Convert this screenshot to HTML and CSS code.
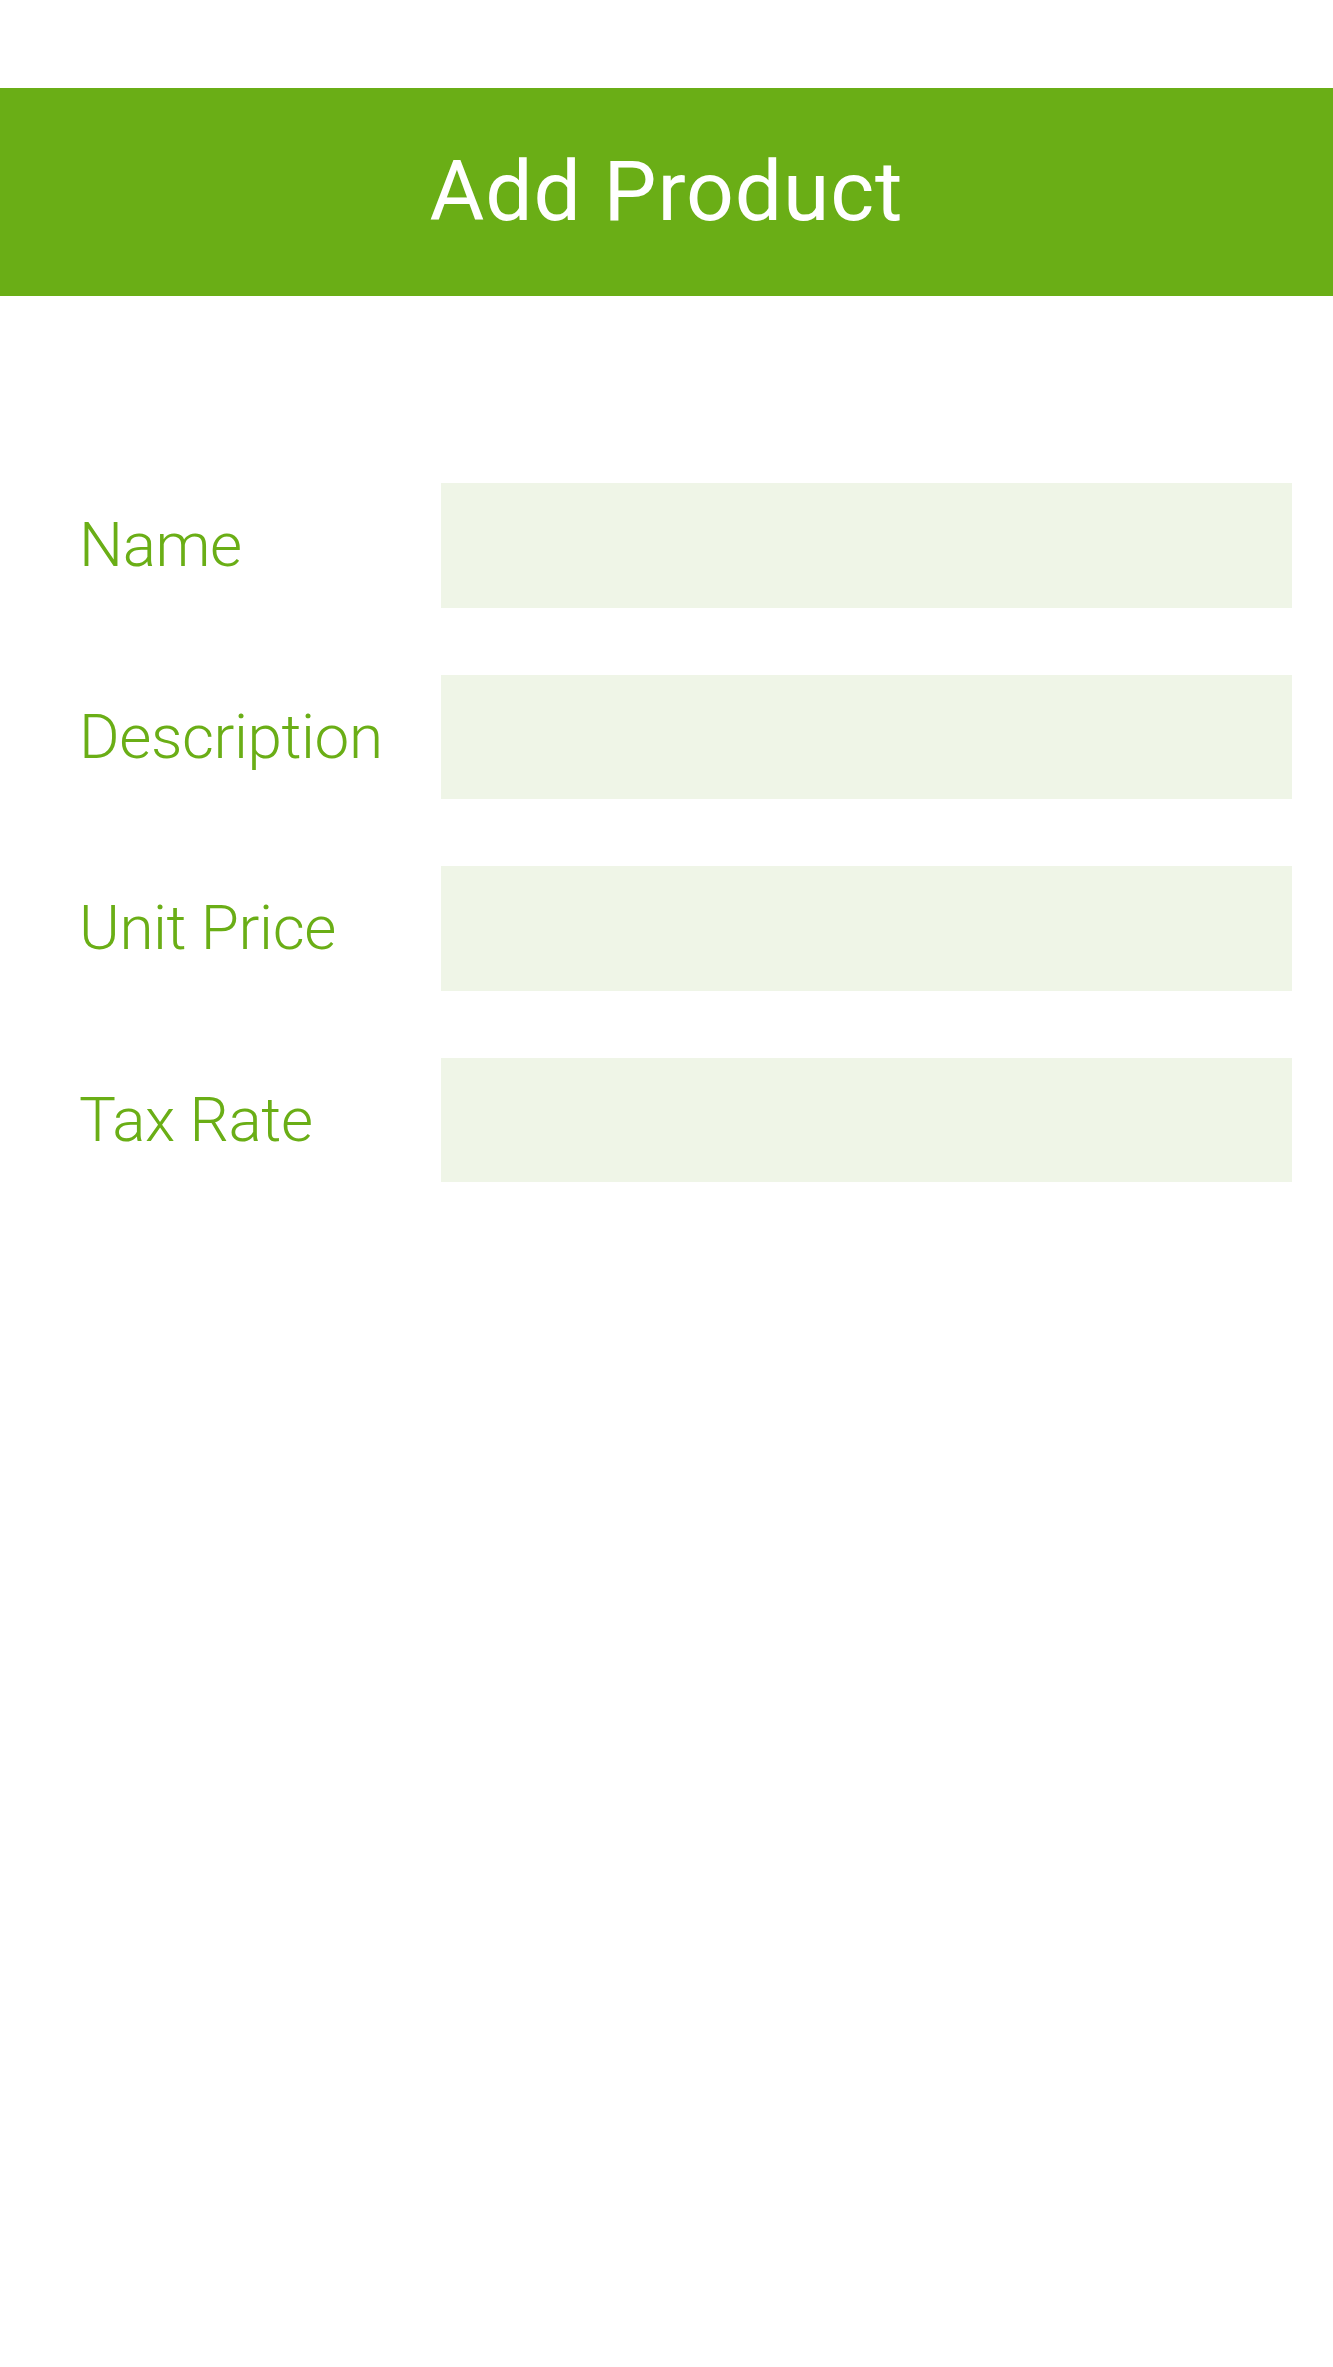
FILE: index.html
```html
<!DOCTYPE html>
<html lang="en">
<head>
<meta charset="utf-8">
<title>Add Product</title>
<link rel="stylesheet" href="styles.css">
</head>
<body>
<header class="header"><h1 class="title">Add Product</h1></header>
<form class="form">
  <div class="row"><label class="label" for="name">Name</label><input class="field" id="name" type="text"></div>
  <div class="row"><label class="label" for="desc">Description</label><input class="field" id="desc" type="text"></div>
  <div class="row"><label class="label" for="price">Unit Price</label><input class="field" id="price" type="text"></div>
  <div class="row"><label class="label" for="tax">Tax Rate</label><input class="field" id="tax" type="text"></div>
</form>
</body>
</html>
```
FILE: styles.css
```css
html, body {
  margin: 0;
  padding: 0;
  background: #ffffff;
}
body {
  font-family: Roboto, "Liberation Sans", sans-serif;
}
.header {
  margin-top: 88px;
  height: 208px;
  background: #6aae16;
  display: flex;
  align-items: center;
  justify-content: center;
}
.title {
  margin: 0;
  color: #ffffff;
  font-weight: 400;
  font-size: 84px;
  letter-spacing: 0.9px;
  line-height: 1;
}
.form {
  padding: 187px 41px 0 79px;
  display: flex;
  flex-direction: column;
  gap: 67px;
}
.row {
  display: flex;
  align-items: center;
  height: 124.5px;
}
.label {
  width: 362px;
  flex: none;
  color: #6aae16;
  font-weight: 300;
  font-size: 62px;
  letter-spacing: -0.4px;
  line-height: 1;
}
.field {
  flex: 1;
  height: 100%;
  border: 0;
  padding: 0;
  margin: 0;
  background: #eff5e7;
  outline: none;
}
```
